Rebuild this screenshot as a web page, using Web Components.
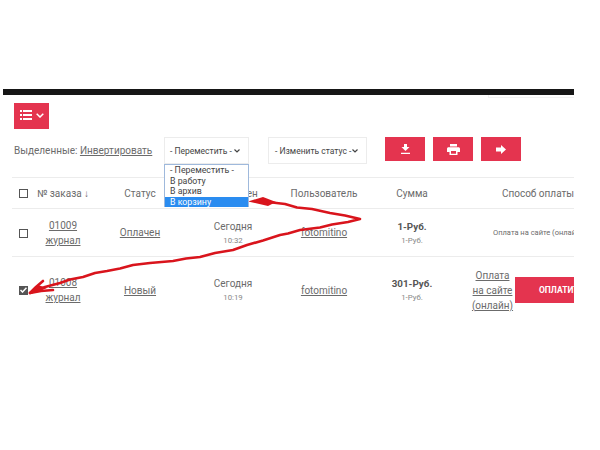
<!DOCTYPE html>
<html>
<head>
<meta charset="utf-8">
<style>
  html, body { margin: 0; background: #fff; }
  body { font-family: Roboto, "Liberation Sans", sans-serif; color: #6b6b6b; width: 600px; height: 450px; overflow: hidden; position: relative; }
</style>
</head>
<body>
<order-page>
  <order-toolbar slot="toolbar"></order-toolbar>
  <order-row slot="rows" num="01009" status="Оплачен" time="10:32" sum="1-Руб." sub="1-Руб." pay="Оплата на сайте (онлайн)"></order-row>
  <order-row slot="rows" num="01008" status="Новый" time="10:19" sum="301-Руб." sub="1-Руб." pay="Оплата на сайте (онлайн)" checked unpaid></order-row>
</order-page>
<red-arrows></red-arrows>
<script>
// icons
const ICONS = {
  list: '<svg width="12" height="10" viewBox="0 0 12 10"><path fill="#fff" d="M0 0h2v2H0zM3 0h9v2H3zM0 4h2v2H0zM3 4h9v2H3zM0 8h2v2H0zM3 8h9v2H3z"/></svg>',
  chevronWhite: '<svg width="8" height="5" viewBox="0 0 8 5"><path fill="none" stroke="#fff" stroke-width="1.500" d="M.7 .7L4 4 7.300 .7"/></svg>',
  chevron: '<svg width="6" height="4" viewBox="0 0 6 4" style="flex:none"><path fill="none" stroke="#444" stroke-width="1.200" d="M.5 .5L3 3 5.500 .5"/></svg>',
  download: '<svg width="9" height="10" viewBox="0 0 9 10"><path fill="#fff" d="M3 0h3v3h2.500L4.500 7 .5 3H3zM0 8.800h9V10H0z"/></svg>',
  print: '<svg width="13" height="11" viewBox="0 0 13 11"><path fill="#fff" fill-rule="evenodd" d="M3 0h7v2.500H3zM1.500 3.300h10c.8 0 1.500.7 1.500 1.500V8h-2.500v3h-8V8H0V4.800c0-.8.700-1.500 1.500-1.500zM4 7v2.800h5V7z"/></svg>',
  arrow: '<svg width="10" height="9" viewBox="0 0 10 9"><path fill="#fff" d="M0 2.500h5V0l5 4.500L5 9V6.500H0z"/></svg>'
};

class OrderPage extends HTMLElement {
  constructor() {
    super();
    this.attachShadow({ mode: 'open' });
    this.shadowRoot.innerHTML = `
      <style>
        :host { display: block; margin: 89px 26px 0 3px; overflow: hidden; }
        .bar { height: 6px; background: #161616; }
        .strip { height: 2px; margin-left: 485px; border: 1px solid #f2f2f2; border-top: 0; border-right: 0; }
        .content { padding: 5px 0 0 11px; width: 600px; }
      </style>
      <div class="bar"></div>
      <div class="strip"></div>
      <div class="content">
        <slot name="toolbar"></slot>
        <order-table><slot name="rows"></slot></order-table>
      </div>`;
  }
}
customElements.define('order-page', OrderPage);

class OrderToolbar extends HTMLElement {
  constructor() {
    super();
    this.attachShadow({ mode: 'open' });
    this.shadowRoot.innerHTML = `
      <style>
        :host { display: block; }
        .menu { width: 35px; height: 26px; background: #e4344f; display: flex; align-items: center; justify-content: center; gap: 4px; padding-bottom: 2px; box-sizing: border-box; }
        .actions { display: flex; align-items: flex-start; margin-top: 8px; height: 40px; }
        .label { font-size: 10px; width: 150px; line-height: 27px; white-space: nowrap; }
        u { text-underline-offset: 1px; }
        .select { box-sizing: border-box; height: 27px; border: 1px solid #ececec; display: flex; align-items: center; justify-content: space-between; font-size: 8.500px; color: #444; padding: 0 8px 0 5px; position: relative; white-space: nowrap; }
        .move { width: 85px; margin-right: 19px; }
        .status { width: 99px; margin-right: 18px; padding-left: 6px; }
        .btn { width: 40px; height: 24px; background: #e4344f; display: flex; align-items: center; justify-content: center; margin-right: 8px; }
        .list { position: absolute; left: -1px; top: 26px; width: 85px; box-sizing: border-box; background: #fff; border: 1px solid #9fb9dc; border-bottom: 0; font-size: 8.800px; line-height: 10.500px; color: #444; z-index: 2; }
        .list div { padding: 0 5px; height: 10.500px; }
        .list .on { background: #2a8cf0; color: #fff; }
      </style>
      <div class="menu">${ICONS.list}${ICONS.chevronWhite}</div>
      <div class="actions">
        <div class="label">Выделенные: <u>Инвертировать</u></div>
        <div class="select move"><span>- Переместить -</span>${ICONS.chevron}
          <div class="list"><div>- Переместить -</div><div>В работу</div><div>В архив</div><div class="on">В корзину</div></div>
        </div>
        <div class="select status"><span>- Изменить статус -</span>${ICONS.chevron}</div>
        <div class="btn">${ICONS.download}</div>
        <div class="btn">${ICONS.print}</div>
        <div class="btn">${ICONS.arrow}</div>
      </div>`;
  }
}
customElements.define('order-toolbar', OrderToolbar);

const COLS = '20px 50px 104px 82px 100px 76px 176px';

class OrderTable extends HTMLElement {
  constructor() {
    super();
    this.attachShadow({ mode: 'open' });
    this.shadowRoot.innerHTML = `
      <style>
        :host { display: block; margin-left: -2px; }
        .head { display: grid; grid-template-columns: ${COLS}; align-items: center; height: 30px; border-top: 1px solid #ececec; border-bottom: 1px solid #ececec; font-size: 10px; text-align: center; padding-left: 6px; }
        .box { width: 7px; height: 7px; border: 1.500px solid #555; margin-left: 1px; }
        .left { text-align: left; margin-left: -1px; white-space: nowrap; }
        .pay { white-space: nowrap; }
      </style>
      <div class="head">
        <div class="box"></div>
        <div class="left">№ заказа ↓</div>
        <div>Статус</div>
        <div>Оформлен</div>
        <div>Пользователь</div>
        <div>Сумма</div>
        <div class="pay">Способ оплаты</div>
      </div>
      <slot></slot>`;
  }
}
customElements.define('order-table', OrderTable);

class OrderRow extends HTMLElement {
  constructor() {
    super();
    this.attachShadow({ mode: 'open' });
    const a = n => this.getAttribute(n);
    const checked = this.hasAttribute('checked');
    const unpaid = this.hasAttribute('unpaid');
    this.shadowRoot.innerHTML = `
      <style>
        :host { display: block; }
        .row { display: grid; grid-template-columns: ${COLS}; align-items: center; height: ${unpaid ? 66 : 47}px; padding-left: 6px; text-align: center; font-size: 10px; border-bottom: ${unpaid ? 0 : 1}px solid #ececec; }
        u { text-underline-offset: 1px; }
        .box { width: 7px; height: 7px; border: 1.500px solid #555; margin: ${checked ? 0 : 1}px 0 0 1px; display: flex; align-items: center; justify-content: center; }
        .box.on { background: #555; }
        .num { line-height: 15px; }
        .small { font-size: 7.800px; margin-top: 4px; color: #888; }
        .strong { font-weight: 700; font-size: 9.800px; color: #555; }
        .pay-small { font-size: 7.500px; white-space: nowrap; }
        .pay-cell { display: flex; align-items: center; padding-left: 20px; }
        .pay-link { width: 45px; flex: none; line-height: 15px; white-space: nowrap; }
        .pay-btn { width: 90px; height: 26px; flex: none; background: #e4344f; color: #fff; font-size: 8.500px; font-weight: 700; display: flex; align-items: center; padding-left: 24px; box-sizing: border-box; }
      </style>
      <div class="row">
        <div class="box ${checked ? 'on' : ''}">${checked ? '<svg width="7" height="6" viewBox="0 0 7 6" style="flex:none"><path fill="none" stroke="#fff" stroke-width="1.500" d="M.5 3l2 2L6.500 .7"/></svg>' : ''}</div>
        <div class="num"><u>${a('num')}</u><br><u>журнал</u></div>
        <div><u>${a('status')}</u></div>
        <div><div>Сегодня</div><div class="small">${a('time')}</div></div>
        <div><u>fotomitino</u></div>
        <div><div class="strong">${a('sum')}</div><div class="small">${a('sub')}</div></div>
        ${unpaid
          ? `<div class="pay-cell"><div class="pay-link"><u>Оплата</u><br><u>на сайте</u><br><u>(онлайн)</u></div><div class="pay-btn">ОПЛАТИТЬ</div></div>`
          : `<div class="pay-small">${a('pay')}</div>`}
      </div>`;
  }
}
customElements.define('order-row', OrderRow);

// hand-drawn arrows lying over the table
class RedArrows extends HTMLElement {
  constructor() {
    super();
    this.attachShadow({ mode: 'open' });
    this.shadowRoot.innerHTML = `
      <style>
        :host { display: block; position: absolute; left: 0; top: 0; width: 600px; height: 450px; pointer-events: none; }
        svg { display: block; }
      </style>
      <svg width="600" height="450" viewBox="0 0 600 450">
        <path fill="#d9141c" d="M248 201.500L263 197 276 202 268 206z"/>
        <path fill="none" stroke="#d9141c" stroke-width="2.600" stroke-linejoin="round" stroke-linecap="round"
          d="M268 202L285 204 297 207.500 312 209 330 213 345 215.500 360 219 348 222 332 224.500 320 227.500 300 230 288 233.500 280 235 263 240.500 247 245 233 250 215 253 200 257 186 258.500 173 261 150 263 133 265 120 268.500 107 271 95 273 83 277 70 279.500 60 283 45 287 30 293"/>
        <path fill="none" stroke="#d9141c" stroke-width="2.600" stroke-linecap="round" stroke-linejoin="round"
          d="M43 281L36 287 30 293 41 291 53 290"/>
        <path fill="#d9141c" d="M30 293L38 285 47 288 40 291z"/>
      </svg>`;
  }
}
customElements.define('red-arrows', RedArrows);
</script>
</body>
</html>
